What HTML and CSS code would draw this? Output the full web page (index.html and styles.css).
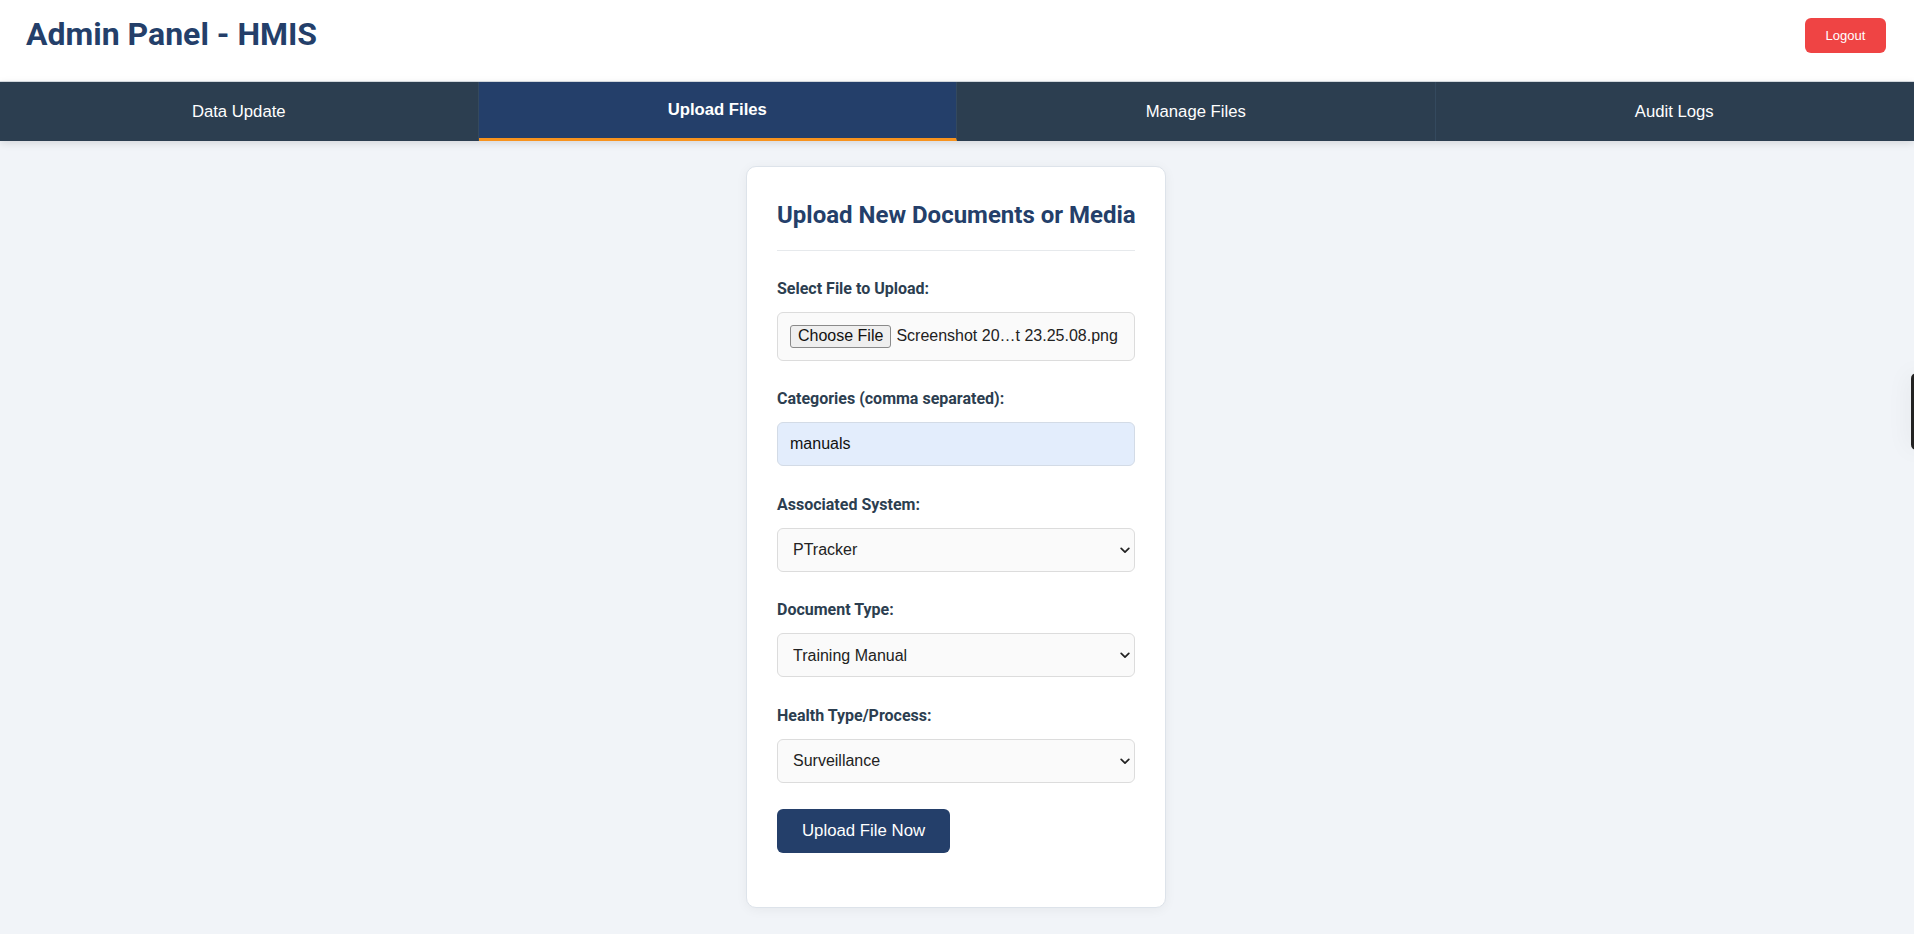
FILE: index.html
```html
<!DOCTYPE html>
<html lang="en">
<head>
<meta charset="utf-8">
<title>Admin Panel - HMIS</title>
<link rel="stylesheet" href="styles.css">
</head>
<body>
<header class="topbar">
  <h1 class="brand">Admin Panel - HMIS</h1>
  <button class="logout" type="button">Logout</button>
</header>
<nav class="tabs">
  <button class="tab" type="button">Data Update</button>
  <button class="tab active" type="button">Upload Files</button>
  <button class="tab" type="button">Manage Files</button>
  <button class="tab" type="button">Audit Logs</button>
</nav>
<main class="content">
  <section class="card">
    <h2 class="card-title">Upload New Documents or Media</h2>
    <form class="upload-form">
      <div class="group">
        <label class="label">Select File to Upload:</label>
        <div class="file-box">
          <span class="file-btn">Choose File</span>
          <span class="file-name">Screenshot 20…t 23.25.08.png</span>
        </div>
      </div>
      <div class="group">
        <label class="label" for="cats">Categories (comma separated):</label>
        <input class="field autofill" id="cats" type="text" value="manuals">
      </div>
      <div class="group">
        <label class="label" for="sys">Associated System:</label>
        <div class="select-wrap">
          <select class="field select" id="sys"><option>PTracker</option></select>
          <svg class="chev" width="10" height="7" viewBox="0 0 10 7"><path d="M1.2 1.4 L5 5.2 L8.8 1.4" fill="none" stroke="#222" stroke-width="1.7" stroke-linecap="round" stroke-linejoin="round"/></svg>
        </div>
      </div>
      <div class="group">
        <label class="label" for="doc">Document Type:</label>
        <div class="select-wrap">
          <select class="field select" id="doc"><option>Training Manual</option></select>
          <svg class="chev" width="10" height="7" viewBox="0 0 10 7"><path d="M1.2 1.4 L5 5.2 L8.8 1.4" fill="none" stroke="#222" stroke-width="1.7" stroke-linecap="round" stroke-linejoin="round"/></svg>
        </div>
      </div>
      <div class="group last">
        <label class="label" for="health">Health Type/Process:</label>
        <div class="select-wrap">
          <select class="field select" id="health"><option>Surveillance</option></select>
          <svg class="chev" width="10" height="7" viewBox="0 0 10 7"><path d="M1.2 1.4 L5 5.2 L8.8 1.4" fill="none" stroke="#222" stroke-width="1.7" stroke-linecap="round" stroke-linejoin="round"/></svg>
        </div>
      </div>
      <button class="submit" type="button">Upload File Now</button>
    </form>
  </section>
</main>
<div class="edge-widget"></div>
</body>
</html>
```
FILE: styles.css
```css
* { box-sizing: border-box; }
html, body { margin: 0; padding: 0; }
body {
  background: #f1f4f8;
  font-family: "Liberation Sans", Arial, sans-serif;
  min-height: 934px;
  overflow: hidden;
}
.topbar {
  height: 82px;
  background: #fff;
  border-bottom: 1px solid #d8dde3;
  display: flex;
  align-items: center;
  justify-content: space-between;
  padding: 0 28px 12px 26px;
}
.brand {
  margin: 0;
  font-family: Roboto, "Liberation Sans", sans-serif;
  font-weight: 700;
  font-size: 32px;
  line-height: 37px;
  color: #243f6a;
}
.logout {
  width: 81px;
  height: 35px;
  border: none;
  border-radius: 6px;
  background: #ef4444;
  color: #fff;
  font-family: "Liberation Sans", Arial, sans-serif;
  font-size: 13px;
  margin-top: 2px;
  padding: 0;
}
.tabs {
  display: flex;
  height: 59px;
  background: #2c3e50;
  box-shadow: 0 2px 8px rgba(0, 0, 0, 0.12);
  position: relative;
}
.tab {
  flex: 1 1 0;
  height: 59px;
  border: none;
  border-right: 1px solid #34495e;
  background: #2c3e50;
  color: #fff;
  font-family: "Liberation Sans", Arial, sans-serif;
  font-size: 16.7px;
  padding: 0;
}
.tab:last-child { border-right: 1px solid transparent; }
.tab.active {
  background: #243f6a;
  font-weight: 700;
  border-bottom: 3px solid #f7931e;
}
.content {
  padding: 25px 2px 26px 0;
  display: flex;
  justify-content: center;
}
.card {
  width: 420px;
  background: #fff;
  border: 1px solid #dde3ea;
  border-radius: 10px;
  box-shadow: 0 2px 12px rgba(0, 0, 0, 0.05);
  padding: 34px 30px 54px;
}
.card-title {
  margin: 0 0 28px;
  font-family: Roboto, "Liberation Sans", sans-serif;
  font-weight: 700;
  font-size: 24px;
  line-height: 28px;
  color: #243f6a;
  padding-bottom: 21px;
  border-bottom: 1px solid #e6e9ec;
  white-space: nowrap;
}
.upload-form { display: flex; flex-direction: column; align-items: stretch; }
.group { margin-bottom: 28.5px; display: flex; flex-direction: column; }
.group.last { margin-bottom: 26px; }
.label {
  display: block;
  font-family: Roboto, "Liberation Sans", sans-serif;
  font-weight: 700;
  font-size: 16px;
  line-height: 19px;
  color: #2c3e50;
  margin-bottom: 14px;
}
.file-box {
  height: 48.5px;
  border: 1px solid #dcdcdc;
  border-radius: 6px;
  background: #fafafa;
  display: flex;
  align-items: center;
  padding: 0 12px;
  font-family: "Liberation Sans", Arial, sans-serif;
  font-size: 16px;
  color: #222;
}
.file-btn {
  height: 23px;
  display: flex;
  align-items: center;
  padding: 0 7px;
  border: 1px solid #8a8a8a;
  border-radius: 3px;
  background: #efefef;
  color: #111;
  margin-right: 5px;
}
.field {
  width: 100%;
  height: 44px;
  border: 1px solid #dcdcdc;
  border-radius: 6px;
  background: #fafafa;
  font-family: "Liberation Sans", Arial, sans-serif;
  font-size: 16px;
  color: #111;
  padding: 0 12px;
  margin: 0;
  outline: none;
}
.field.autofill {
  background: #e3edfc;
  border-color: #d3dbe6;
}
.select-wrap { position: relative; }
.select {
  -webkit-appearance: none;
  appearance: none;
  padding-left: 15px;
  color: #222;
}
.chev {
  position: absolute;
  right: 5px;
  top: 19px;
  pointer-events: none;
}
.submit {
  align-self: flex-start;
  height: 44px;
  padding: 0 25px;
  border: none;
  border-radius: 6px;
  background: #243f6a;
  color: #fff;
  font-family: "Liberation Sans", Arial, sans-serif;
  font-size: 16.8px;
}
.edge-widget {
  position: fixed;
  right: -8px;
  top: 373px;
  width: 11px;
  height: 77px;
  border-radius: 6px;
  background: #222;
  box-shadow: 0 0 24px rgba(0, 0, 0, 0.08);
}
```
